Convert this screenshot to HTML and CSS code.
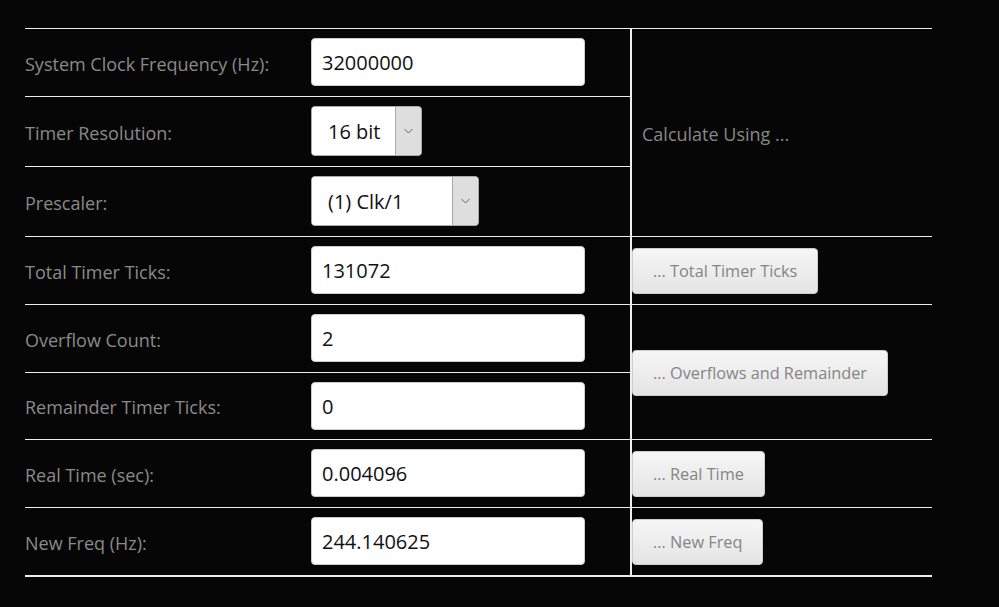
FILE: index.html
```html
<!DOCTYPE html>
<html lang="en">
<head>
    <meta charset="UTF-8">
    <meta name="viewport" content="width=device-width, initial-scale=1.0">
    <title>Timer Calculator</title>
    <link rel="stylesheet" href="styles.css">
</head>
<body>
    <div class="container">
        <table class="calc">
            <colgroup>
                <col class="col-label">
                <col class="col-field">
                <col class="col-action">
            </colgroup>
            <tr>
                <td class="label">System Clock Frequency (Hz):</td>
                <td><input type="text" class="field" value="32000000"></td>
                <td class="action using" rowspan="3">Calculate Using ...</td>
            </tr>
            <tr>
                <td class="label">Timer Resolution:</td>
                <td>
                    <span class="select select-bits">
                        <select>
                            <option selected>16 bit</option>
                            <option>8 bit</option>
                        </select>
                        <span class="arrow"><svg width="9" height="6" viewBox="0 0 9 6"><path d="M0.5 1l4 4 4-4" fill="none" stroke="#666" stroke-width="1"/></svg></span>
                    </span>
                </td>
            </tr>
            <tr>
                <td class="label">Prescaler:</td>
                <td>
                    <span class="select select-prescale">
                        <select>
                            <option selected>(1) Clk/1</option>
                            <option>(8) Clk/8</option>
                            <option>(64) Clk/64</option>
                        </select>
                        <span class="arrow"><svg width="9" height="6" viewBox="0 0 9 6"><path d="M0.5 1l4 4 4-4" fill="none" stroke="#666" stroke-width="1"/></svg></span>
                    </span>
                </td>
            </tr>
            <tr>
                <td class="label">Total Timer Ticks:</td>
                <td><input type="text" class="field" value="131072"></td>
                <td class="action"><button>... Total Timer Ticks</button></td>
            </tr>
            <tr>
                <td class="label">Overflow Count:</td>
                <td><input type="text" class="field" value="2"></td>
                <td class="action" rowspan="2"><button>... Overflows and Remainder</button></td>
            </tr>
            <tr class="tight">
                <td class="label">Remainder Timer Ticks:</td>
                <td><input type="text" class="field" value="0"></td>
            </tr>
            <tr>
                <td class="label">Real Time (sec):</td>
                <td><input type="text" class="field" value="0.004096"></td>
                <td class="action"><button>... Real Time</button></td>
            </tr>
            <tr>
                <td class="label">New Freq (Hz):</td>
                <td><input type="text" class="field" value="244.140625"></td>
                <td class="action"><button>... New Freq</button></td>
            </tr>
        </table>
    </div>
</body>
</html>
```

FILE: styles.css
```css
body {
    margin: 0;
    background: #060606;
    font-family: "Open Sans", sans-serif;
    color: #888;
}
.container {
    padding: 28px 0 0 25px;
}
.calc {
    border-collapse: collapse;
    width: 907px;
    table-layout: fixed;
    border-bottom: 2px solid #eee;
}
.col-label { width: 286px; }
.col-field { width: 320px; }
.col-action { width: 301px; }
.calc td {
    border-top: 1px solid #eee;
    padding: 9px 0 10px;
    vertical-align: middle;
}
.calc .tight td {
    padding-bottom: 9px;
}
.calc .label {
    padding-top: 11px;
    padding-bottom: 8px;
    font-size: 18px;
    color: #8a8a8a;
}
.action {
    border-left: 2px solid #eee;
}
.calc .using {
    padding-left: 10px;
    padding-top: 11px;
    padding-bottom: 8px;
    font-size: 18px;
}
.field {
    display: block;
    width: 274px;
    height: 48px;
    box-sizing: border-box;
    padding: 0 10px;
    border: 1px solid #ccc;
    border-radius: 4px;
    background: #fff;
    font-family: "Open Sans", sans-serif;
    font-size: 20px;
    color: #111;
    outline: none;
}
.select {
    display: flex;
    height: 50px;
    box-sizing: border-box;
    border: 1px solid #aaa;
    border-radius: 4px;
    background: #fff;
    overflow: hidden;
}
.select-bits { width: 111px; }
.select-prescale { width: 168px; }
.select select {
    flex: 1;
    min-width: 0;
    appearance: none;
    -webkit-appearance: none;
    border: none;
    background: #fff;
    padding: 0 0 0 16px;
    font-family: "Open Sans", sans-serif;
    font-size: 20px;
    color: #111;
    outline: none;
}
.arrow {
    width: 25px;
    display: flex;
    align-items: center;
    justify-content: center;
    background: #dedede;
    border-left: 1px solid #aaa;
}
button {
    height: 46px;
    margin-top: 2px;
    padding: 0 20px;
    border: 1px solid #ccc;
    border-radius: 4px;
    background: linear-gradient(#f6f6f6, #e4e4e4);
    font-family: "Open Sans", sans-serif;
    font-size: 16.3px;
    color: #858585;
    cursor: pointer;
}
```
